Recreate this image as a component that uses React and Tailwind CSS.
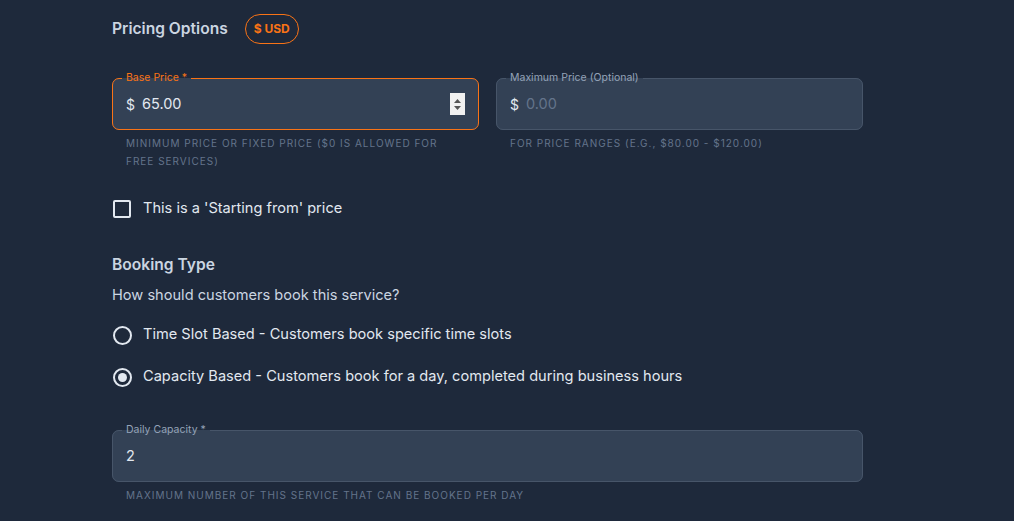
import React from 'react';

const OutlinedField = ({ label, active, children, className = '' }) => (
  <div className={`relative h-[52px] rounded-[7px] bg-[#334155] flex items-center px-[14px] ${className}`}>
    <fieldset
      className={`absolute inset-x-0 bottom-0 -top-[6px] rounded-[7px] border px-[9px] pointer-events-none ${
        active ? 'border-[#f97316]' : 'border-[#475569]'
      }`}
    >
      <legend className={`px-[4px] text-[10.5px] leading-[12px] ${active ? 'text-[#f97316]' : 'text-[#94a3b8]'}`}>
        {label}
      </legend>
    </fieldset>
    {children}
  </div>
);

const Helper = ({ children }) => (
  <p className="mt-[4px] px-[14px] text-[10px] leading-[18px] uppercase tracking-[0.1em] text-[#64748b]">
    {children}
  </p>
);

const Radio = ({ checked, label }) => (
  <label className="flex items-center h-[24px] gap-[11px] cursor-pointer">
    <span className="w-[19px] h-[19px] ml-[1px] rounded-full border-2 border-[#e2e8f0] flex items-center justify-center">
      {checked && <span className="w-[9px] h-[9px] rounded-full bg-[#e2e8f0]" />}
    </span>
    <span className="text-[14.6px] text-[#e2e8f0]">{label}</span>
  </label>
);

export default function App() {
  return (
    <div className="min-h-[521px] bg-[#1e293b] pl-[112px] pt-[14px] font-['Inter',sans-serif]">
      <div className="flex items-center gap-[17px] h-[30px]">
        <h2 className="text-[15.6px] font-semibold text-[#cbd5e1]">Pricing Options</h2>
        <span className="h-[30px] px-[8px] rounded-full border border-[#f97316] text-[#f97316] text-[12px] font-bold flex items-center">
          $&nbsp;USD
        </span>
      </div>

      <div className="grid grid-cols-2 gap-x-[17px] w-[751px] mt-[34px]">
        <div>
          <OutlinedField label="Base Price *" active>
            <span className="text-[14px] text-[#e2e8f0] w-[16px]">$</span>
            <span className="flex-1 text-[14.5px] text-[#e2e8f0]">65.00</span>
            <span className="w-[15px] h-[22px] bg-[#f1f1f1] flex flex-col items-center justify-center gap-[3px]">
              <svg width="7" height="4" viewBox="0 0 7 4"><path d="M3.5 0L7 4H0z" fill="#555" /></svg>
              <svg width="7" height="4" viewBox="0 0 7 4"><path d="M0 0h7L3.5 4z" fill="#555" /></svg>
            </span>
          </OutlinedField>
          <Helper>Minimum price or fixed price ($0 is allowed for free services)</Helper>
        </div>
        <div>
          <OutlinedField label="Maximum Price (Optional)">
            <span className="text-[14px] text-[#e2e8f0] w-[16px]">$</span>
            <span className="flex-1 text-[14.5px] text-[#64748b]">0.00</span>
          </OutlinedField>
          <Helper>For price ranges (e.g., $80.00 - $120.00)</Helper>
        </div>
      </div>

      <label className="mt-[28px] flex items-center h-[22px] gap-[12px]">
        <span className="w-[18px] h-[18px] ml-[1px] rounded-[2px] border-2 border-[#e2e8f0]" />
        <span className="text-[14.6px] text-[#e2e8f0]">This is a 'Starting from' price</span>
      </label>

      <h3 className="mt-[33px] text-[15.6px] leading-[24px] font-semibold text-[#cbd5e1]">Booking Type</h3>
      <p className="mt-[7px] text-[14.6px] leading-[22px] text-[#cbd5e1]">How should customers book this service?</p>

      <div className="mt-[17px] flex flex-col gap-[18px]">
        <Radio label="Time Slot Based - Customers book specific time slots" />
        <Radio checked label="Capacity Based - Customers book for a day, completed during business hours" />
      </div>

      <div className="w-[751px] mt-[41px]">
        <OutlinedField label="Daily Capacity *">
          <span className="text-[14.5px] text-[#e2e8f0]">2</span>
        </OutlinedField>
        <Helper>Maximum number of this service that can be booked per day</Helper>
      </div>
    </div>
  );
}
